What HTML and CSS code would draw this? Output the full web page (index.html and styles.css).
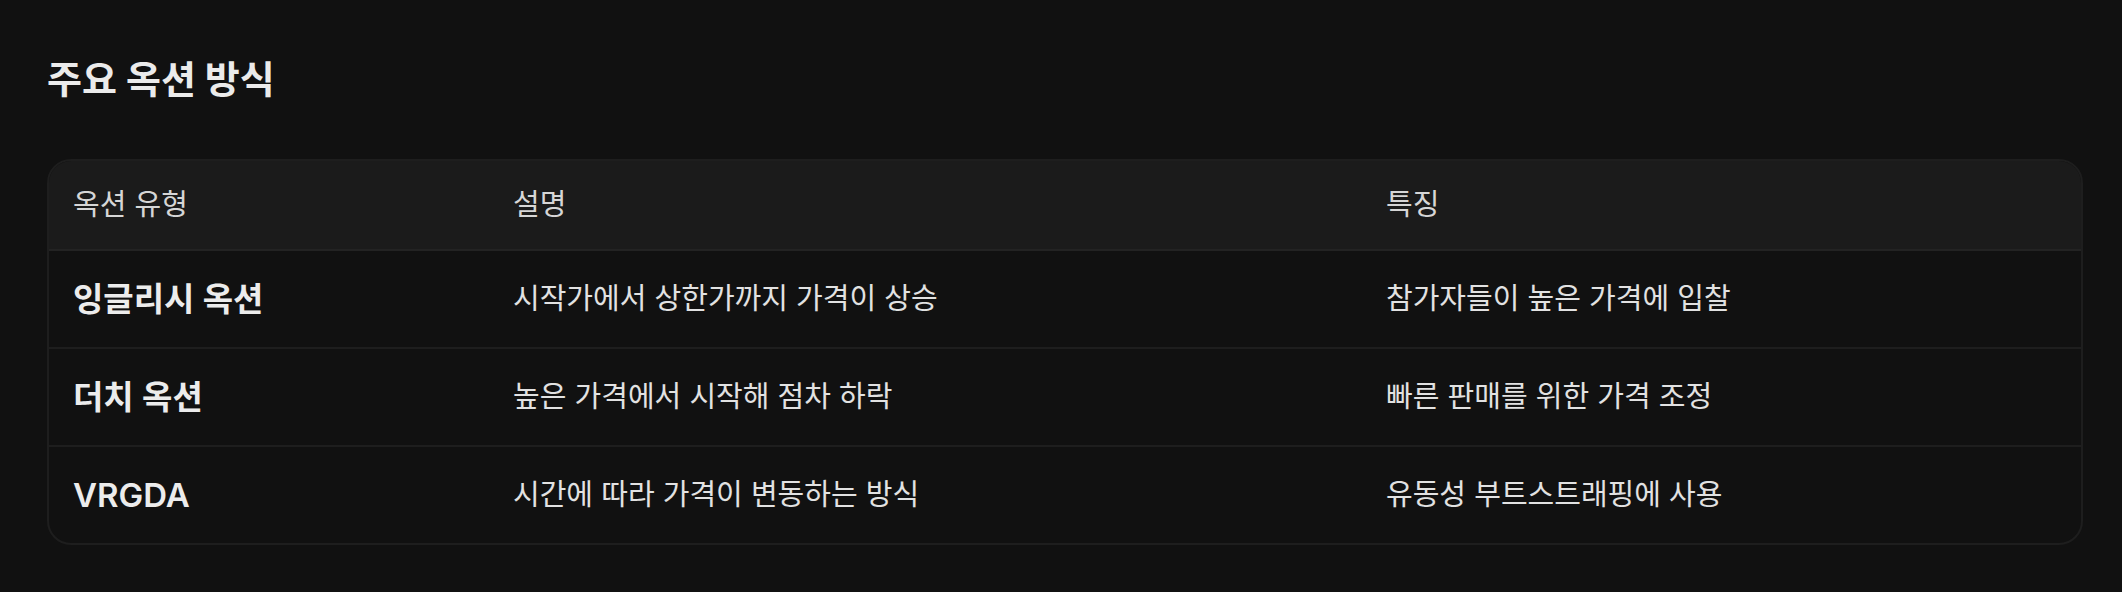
FILE: index.html
```html
<!DOCTYPE html>
<html lang="ko">
<head>
  <meta charset="UTF-8">
  <title>주요 옥션 방식</title>
  <link rel="stylesheet" href="styles.css">
</head>
<body>

  <div class="container">
    <h2>주요 옥션 방식</h2>

    <div class="table-wrap">
      <table>
        <thead>
          <tr>
            <th class="col-type">옥션 유형</th>
            <th class="col-desc">설명</th>
            <th>특징</th>
          </tr>
        </thead>
        <tbody>
          <tr>
            <td class="name">잉글리시 옥션</td>
            <td>시작가에서 상한가까지 가격이 상승</td>
            <td>참가자들이 높은 가격에 입찰</td>
          </tr>
          <tr>
            <td class="name">더치 옥션</td>
            <td>높은 가격에서 시작해 점차 하락</td>
            <td>빠른 판매를 위한 가격 조정</td>
          </tr>
          <tr>
            <td class="name">VRGDA</td>
            <td>시간에 따라 가격이 변동하는 방식</td>
            <td>유동성 부트스트래핑에 사용</td>
          </tr>
        </tbody>
      </table>
    </div>
  </div>

</body>
</html>
```

FILE: styles.css
```css
body {
  margin: 0;
  background-color: #111111;
  color: #e6e6e6;
  font-family: "Inter", "Noto Sans CJK KR", sans-serif;
}

.container {
  width: 2036px;
  margin-left: 47px;
  padding-top: 58px;
}

h2 {
  margin: 0 0 59px 0;
  font-size: 38px;
  line-height: 42px;
  font-weight: 700;
  color: #ebebeb;
}

.table-wrap {
  border: 2px solid #1e1e1e;
  border-radius: 24px;
  overflow: hidden;
}

table {
  width: 100%;
  border-collapse: collapse;
}

th, td {
  text-align: left;
  padding: 29px 24px;
  font-size: 29px;
  line-height: 38px;
  border-bottom: 2px solid #1e1e1e;
}

th {
  background-color: #1b1b1b;
  padding-top: 25px;
  padding-bottom: 25px;
  font-weight: 400;
  color: #d6d6d6;
  border-bottom-color: #232323;
}

td {
  color: #e2e2e2;
}

tbody tr:last-child td {
  border-bottom: none;
}

.col-type {
  width: 392px;
}

.col-desc {
  width: 825px;
}

td.name {
  font-size: 33px;
  font-weight: 600;
  color: #ececec;
}
```
